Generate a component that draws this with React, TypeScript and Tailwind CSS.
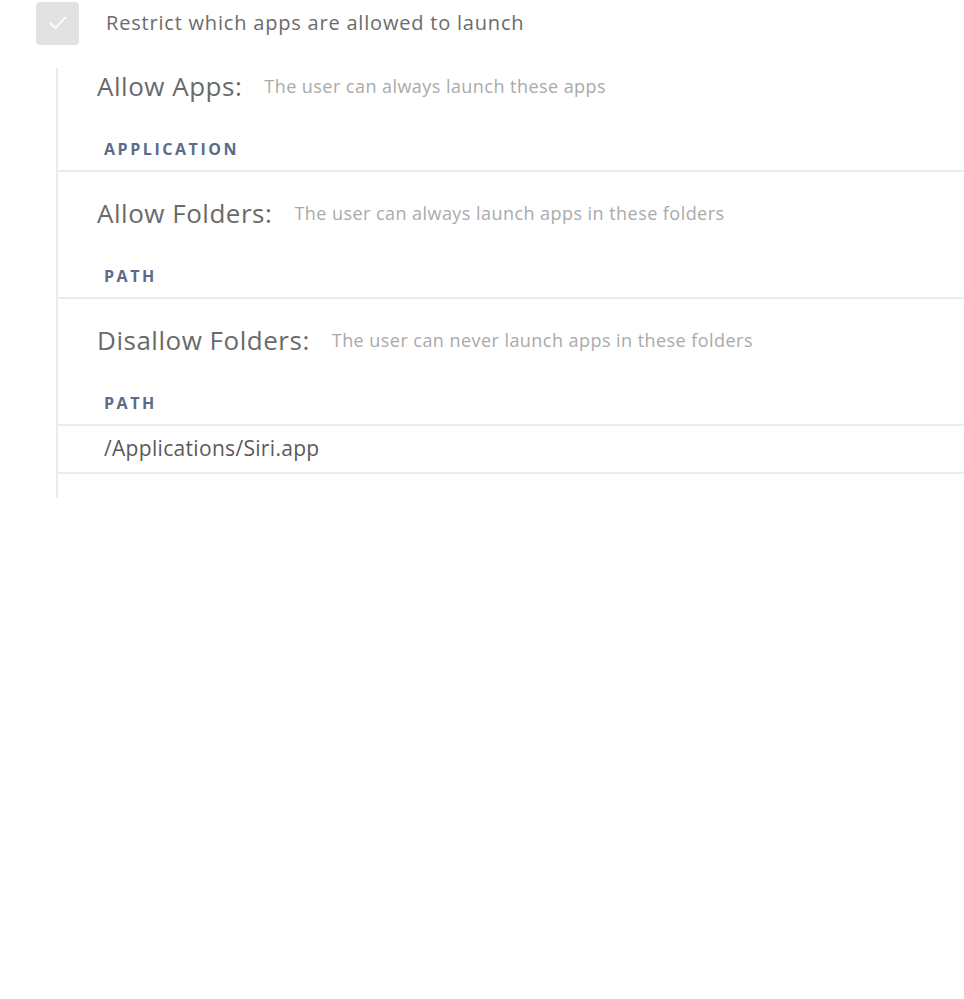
const SECTIONS = [
  { title: "Allow Apps:", desc: "The user can always launch these apps", column: "Application", rows: [] as string[] },
  { title: "Allow Folders:", desc: "The user can always launch apps in these folders", column: "Path", rows: [] as string[] },
  { title: "Disallow Folders:", desc: "The user can never launch apps in these folders", column: "Path", rows: ["/Applications/Siri.app"] },
];

export default function App() {
  return (
    <div className="min-h-screen bg-white font-['Open_Sans','Liberation_Sans',sans-serif]">
      <div className="flex items-center pl-[36px] pt-[1px] h-[45px]">
        <div className="w-[43px] h-[43px] rounded-[4px] bg-[#e2e2e2] flex items-center justify-center">
          <svg width="18" height="14" viewBox="0 0 18 14" fill="none">
            <path d="M1.5 7.5 L6.5 12 L16.5 1.5" stroke="white" strokeWidth="1.8" strokeLinecap="round" strokeLinejoin="round" />
          </svg>
        </div>
        <span className="ml-[27px] text-[20px] tracking-[0.04em] text-[#6b6b6b]">Restrict which apps are allowed to launch</span>
      </div>

      <div className="ml-[56px] mt-[23px] border-l-2 border-[#e8ecf1] pb-[24px]">
        {SECTIONS.map((s, i) => (
          <div key={s.title} className={i === 0 ? "" : "pt-[23px]"}>
            <div className="flex items-center pl-[39px] h-[36px] whitespace-nowrap">
              <span className="text-[26px] tracking-[0.02em] text-[#6a6a6a]">{s.title}</span>
              <span className="ml-[22px] text-[18px] tracking-[0.025em] text-[#aaaaaa]">{s.desc}</span>
            </div>
            <div className="mt-[25px] pl-[46px] h-[43px] pb-[2px] flex items-center border-b-2 border-[#e8ecf1] text-[16px] font-bold uppercase tracking-[0.16em] text-[#5b6b8a]">
              {s.column}
            </div>
            {s.rows.map((r) => (
              <div key={r} className="pl-[46px] h-[48px] flex items-center border-b-2 border-[#e8ecf1] text-[21px] tracking-[0.015em] text-[#5a5a5a]">
                {r}
              </div>
            ))}
          </div>
        ))}
      </div>
    </div>
  );
}
